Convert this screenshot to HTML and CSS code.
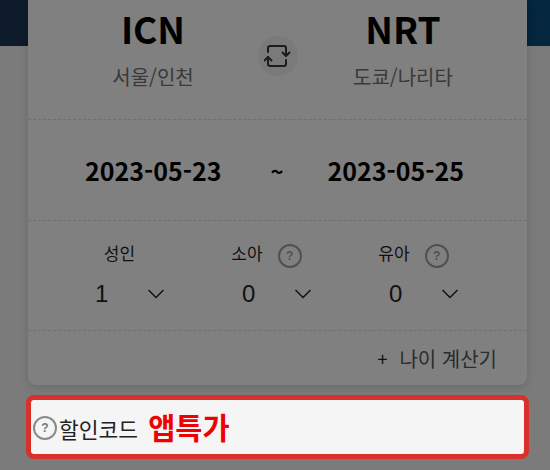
FILE: index.html
```html
<!DOCTYPE html>
<html lang="ko">
<head>
    <meta charset="UTF-8">
    <meta name="viewport" content="width=device-width, initial-scale=1.0">
    <title>항공권 예약</title>
    <link rel="stylesheet" href="styles.css">
</head>

<body>
    <div class="page">
        <div class="card">
            <div class="route">
                <div class="airport">
                    <div class="code">ICN</div>
                    <div class="city">서울/인천</div>
                </div>
                <div class="swap">
                    <svg width="27" height="25" viewBox="0 0 27 25" fill="none" stroke="#1c1c1c" stroke-width="2" stroke-linecap="round" stroke-linejoin="round">
                        <path d="M4 8V4A2 2 0 0 1 6 2H20A2 2 0 0 1 22 4V11"/>
                        <path d="M18.500 8.500L22 12L25.500 8.500"/>
                        <path d="M22 16V20A2 2 0 0 1 20 22H6A2 2 0 0 1 4 20V13"/>
                        <path d="M0.500 16.500L4 13L7.500 16.500"/>
                    </svg>
                </div>
                <div class="airport">
                    <div class="code">NRT</div>
                    <div class="city">도쿄/나리타</div>
                </div>
            </div>
            <div class="dates">
                <span class="date">2023-05-23</span>
                <span class="tilde">~</span>
                <span class="date">2023-05-25</span>
            </div>
            <div class="people">
                <div class="person">
                    <div class="person-label">성인</div>
                    <div class="person-select">
                        <span class="count">1</span>
                        <svg class="chevron" width="18" height="10" viewBox="0 0 18 10" fill="none" stroke="#111" stroke-width="1.500"><path d="M1.500 1L9 8.500L16.500 1"/></svg>
                    </div>
                </div>
                <div class="person">
                    <div class="person-label">소아 <span class="help">?</span></div>
                    <div class="person-select">
                        <span class="count">0</span>
                        <svg class="chevron" width="18" height="10" viewBox="0 0 18 10" fill="none" stroke="#111" stroke-width="1.500"><path d="M1.500 1L9 8.500L16.500 1"/></svg>
                    </div>
                </div>
                <div class="person">
                    <div class="person-label">유아 <span class="help">?</span></div>
                    <div class="person-select">
                        <span class="count">0</span>
                        <svg class="chevron" width="18" height="10" viewBox="0 0 18 10" fill="none" stroke="#111" stroke-width="1.500"><path d="M1.500 1L9 8.500L16.500 1"/></svg>
                    </div>
                </div>
            </div>
            <div class="age-calc"><span class="plus">+</span> 나이 계산기</div>
        </div>
        <div class="promo">
            <span class="help help-light">?</span>
            <span class="promo-label">할인코드</span>
            <span class="promo-code">앱특가</span>
        </div>
    </div>
</body>
</html>
```

FILE: styles.css
```css
body {
    margin: 0;
    font-family: "Noto Sans CJK KR", "Noto Sans", sans-serif;
}

.page {
    width: 550px;
    height: 470px;
    overflow: hidden;
    padding: 0 23px 0 28px;
    box-sizing: border-box;
    background-color: #7b7b7b;
    background-image: linear-gradient(90deg, #0e1b2b 0, #0e1b2b 28px, #04263e 527px);
    background-size: 100% 46px;
    background-repeat: no-repeat;
}

.card {
    height: 385px;
    background: #808080;
    border-radius: 0 0 8px 8px;
    box-shadow: 0 2px 10px rgba(0, 0, 0, 0.15);
}

.route {
    height: 120px;
    box-sizing: border-box;
    display: flex;
    justify-content: space-between;
    padding: 0 69px 0 70px;
    border-bottom: 1px dashed #6f6f6f;
}

.airport {
    width: 110px;
    text-align: center;
    padding-top: 3px;
}

.code {
    font-size: 37px;
    font-weight: 700;
    line-height: 50px;
    color: #000;
}

.city {
    font-size: 20px;
    line-height: 26px;
    margin-top: 11px;
    color: #393939;
}

.swap {
    width: 40px;
    height: 40px;
    margin: 36px 1px 0 0;
    border-radius: 50%;
    background: #7a7a7a;
    display: flex;
    align-items: center;
    justify-content: center;
}

.dates {
    height: 101px;
    box-sizing: border-box;
    display: flex;
    align-items: center;
    justify-content: space-between;
    padding: 0 63px 0 57px;
    border-bottom: 1px dashed #6f6f6f;
    font-size: 25px;
    font-weight: 700;
    color: #000;
}

.tilde {
    font-size: 22px;
    margin-left: 5px;
}

.people {
    height: 110px;
    box-sizing: border-box;
    display: flex;
    padding: 17px 0 0 18px;
    border-bottom: 1px dashed #6f6f6f;
}

.person {
    width: 147px;
}

.person-label {
    display: flex;
    align-items: center;
    justify-content: center;
    gap: 15px;
    height: 28px;
    font-size: 17px;
    color: #111;
}

.person-label .help {
    margin-top: 8px;
}

.person-select {
    display: flex;
    align-items: center;
    gap: 39px;
    height: 40px;
    margin-top: 8px;
    padding-left: 49px;
}

.count {
    font-family: "Liberation Sans", Arial, sans-serif;
    font-size: 24px;
    color: #111;
    width: 13px;
}

.help {
    width: 24px;
    height: 24px;
    box-sizing: border-box;
    border: 2px solid #505050;
    border-radius: 50%;
    display: inline-flex;
    align-items: center;
    justify-content: center;
    font-family: "Liberation Sans", Arial, sans-serif;
    font-size: 12px;
    font-weight: 700;
    color: #505050;
}

.age-calc {
    height: 54px;
    display: flex;
    align-items: center;
    justify-content: flex-end;
    gap: 12px;
    padding-right: 30px;
    font-size: 20px;
    color: #2c2c2c;
}

.plus {
    font-size: 18px;
    color: #111;
}

.promo {
    height: 64px;
    box-sizing: border-box;
    margin: 10px -2px 0 -2px;
    border: 5px solid #d9302a;
    border-radius: 8px;
    background: #f5f5f5;
    display: flex;
    align-items: center;
    gap: 2px;
    padding-left: 2px;
}

.help-light {
    border-color: #8a8a8a;
    color: #777;
    margin-top: 2px;
}

.promo-label {
    font-size: 21.5px;
    color: #222;
    margin-top: 3px;
}

.promo-code {
    font-size: 29.500px;
    font-weight: 700;
    color: #f00000;
    margin: -3px 0 0 8px;
}
```
